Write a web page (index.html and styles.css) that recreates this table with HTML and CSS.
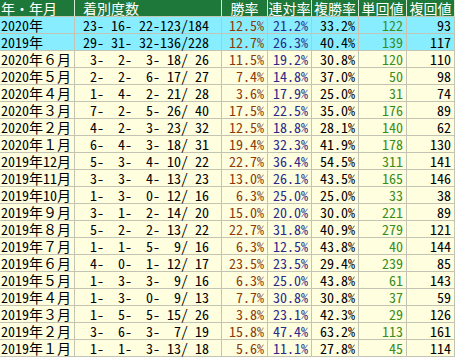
FILE: index.html
```html
<!DOCTYPE html>
<html lang="ja">
<head>
<meta charset="utf-8">
<link rel="stylesheet" href="styles.css">
</head>
<body>
<div class="tbl">
  <div class="row head">
    <div class="c c1">年・年月</div>
    <div class="c c2">着別度数</div>
    <div class="c hc">勝率</div>
    <div class="c hc">連対率</div>
    <div class="c hc">複勝率</div>
    <div class="c hc">単回値</div>
    <div class="c hc">複回値</div>
  </div>
  <div class="row year"><div class="c c1"><span class="h">2020</span>年</div><div class="c c2 h">23- 16- 22-123/184</div><div class="c n win h">12.5%</div><div class="c n ren h">21.2%</div><div class="c n fuku h">33.2%</div><div class="c n tan h">122</div><div class="c n fk h">93</div></div>
  <div class="row year"><div class="c c1"><span class="h">2019</span>年</div><div class="c c2 h">29- 31- 32-136/228</div><div class="c n win h">12.7%</div><div class="c n ren h">26.3%</div><div class="c n fuku h">40.4%</div><div class="c n tan h">139</div><div class="c n fk h">117</div></div>
  <div class="row mon"><div class="c c1"><span class="h">2020</span>年６月</div><div class="c c2 h"> 3-  2-  3- 18/ 26</div><div class="c n win h">11.5%</div><div class="c n ren h">19.2%</div><div class="c n fuku h">30.8%</div><div class="c n tan h">120</div><div class="c n fk h">110</div></div>
  <div class="row mon"><div class="c c1"><span class="h">2020</span>年５月</div><div class="c c2 h"> 2-  2-  6- 17/ 27</div><div class="c n win h">7.4%</div><div class="c n ren h">14.8%</div><div class="c n fuku h">37.0%</div><div class="c n tan h">50</div><div class="c n fk h">98</div></div>
  <div class="row mon"><div class="c c1"><span class="h">2020</span>年４月</div><div class="c c2 h"> 1-  4-  2- 21/ 28</div><div class="c n win h">3.6%</div><div class="c n ren h">17.9%</div><div class="c n fuku h">25.0%</div><div class="c n tan h">31</div><div class="c n fk h">74</div></div>
  <div class="row mon"><div class="c c1"><span class="h">2020</span>年３月</div><div class="c c2 h"> 7-  2-  5- 26/ 40</div><div class="c n win h">17.5%</div><div class="c n ren h">22.5%</div><div class="c n fuku h">35.0%</div><div class="c n tan h">176</div><div class="c n fk h">89</div></div>
  <div class="row mon"><div class="c c1"><span class="h">2020</span>年２月</div><div class="c c2 h"> 4-  2-  3- 23/ 32</div><div class="c n win h">12.5%</div><div class="c n ren h">18.8%</div><div class="c n fuku h">28.1%</div><div class="c n tan h">140</div><div class="c n fk h">62</div></div>
  <div class="row mon"><div class="c c1"><span class="h">2020</span>年１月</div><div class="c c2 h"> 6-  4-  3- 18/ 31</div><div class="c n win h">19.4%</div><div class="c n ren h">32.3%</div><div class="c n fuku h">41.9%</div><div class="c n tan h">178</div><div class="c n fk h">130</div></div>
  <div class="row mon"><div class="c c1"><span class="h">2019</span>年<span class="h">12</span>月</div><div class="c c2 h"> 5-  3-  4- 10/ 22</div><div class="c n win h">22.7%</div><div class="c n ren h">36.4%</div><div class="c n fuku h">54.5%</div><div class="c n tan h">311</div><div class="c n fk h">141</div></div>
  <div class="row mon"><div class="c c1"><span class="h">2019</span>年<span class="h">11</span>月</div><div class="c c2 h"> 3-  3-  4- 13/ 23</div><div class="c n win h">13.0%</div><div class="c n ren h">26.1%</div><div class="c n fuku h">43.5%</div><div class="c n tan h">165</div><div class="c n fk h">146</div></div>
  <div class="row mon"><div class="c c1"><span class="h">2019</span>年<span class="h">10</span>月</div><div class="c c2 h"> 1-  3-  0- 12/ 16</div><div class="c n win h">6.3%</div><div class="c n ren h">25.0%</div><div class="c n fuku h">25.0%</div><div class="c n tan h">33</div><div class="c n fk h">38</div></div>
  <div class="row mon"><div class="c c1"><span class="h">2019</span>年９月</div><div class="c c2 h"> 3-  1-  2- 14/ 20</div><div class="c n win h">15.0%</div><div class="c n ren h">20.0%</div><div class="c n fuku h">30.0%</div><div class="c n tan h">221</div><div class="c n fk h">89</div></div>
  <div class="row mon"><div class="c c1"><span class="h">2019</span>年８月</div><div class="c c2 h"> 5-  2-  2- 13/ 22</div><div class="c n win h">22.7%</div><div class="c n ren h">31.8%</div><div class="c n fuku h">40.9%</div><div class="c n tan h">279</div><div class="c n fk h">121</div></div>
  <div class="row mon"><div class="c c1"><span class="h">2019</span>年７月</div><div class="c c2 h"> 1-  1-  5-  9/ 16</div><div class="c n win h">6.3%</div><div class="c n ren h">12.5%</div><div class="c n fuku h">43.8%</div><div class="c n tan h">40</div><div class="c n fk h">144</div></div>
  <div class="row mon"><div class="c c1"><span class="h">2019</span>年６月</div><div class="c c2 h"> 4-  0-  1- 12/ 17</div><div class="c n win h">23.5%</div><div class="c n ren h">23.5%</div><div class="c n fuku h">29.4%</div><div class="c n tan h">239</div><div class="c n fk h">85</div></div>
  <div class="row mon"><div class="c c1"><span class="h">2019</span>年５月</div><div class="c c2 h"> 1-  3-  3-  9/ 16</div><div class="c n win h">6.3%</div><div class="c n ren h">25.0%</div><div class="c n fuku h">43.8%</div><div class="c n tan h">61</div><div class="c n fk h">143</div></div>
  <div class="row mon"><div class="c c1"><span class="h">2019</span>年４月</div><div class="c c2 h"> 1-  3-  0-  9/ 13</div><div class="c n win h">7.7%</div><div class="c n ren h">30.8%</div><div class="c n fuku h">30.8%</div><div class="c n tan h">37</div><div class="c n fk h">59</div></div>
  <div class="row mon"><div class="c c1"><span class="h">2019</span>年３月</div><div class="c c2 h"> 1-  5-  5- 15/ 26</div><div class="c n win h">3.8%</div><div class="c n ren h">23.1%</div><div class="c n fuku h">42.3%</div><div class="c n tan h">29</div><div class="c n fk h">126</div></div>
  <div class="row mon"><div class="c c1"><span class="h">2019</span>年２月</div><div class="c c2 h"> 3-  6-  3-  7/ 19</div><div class="c n win h">15.8%</div><div class="c n ren h">47.4%</div><div class="c n fuku h">63.2%</div><div class="c n tan h">113</div><div class="c n fk h">161</div></div>
  <div class="row mon"><div class="c c1"><span class="h">2019</span>年１月</div><div class="c c2 h"> 1-  1-  3- 13/ 18</div><div class="c n win h">5.6%</div><div class="c n ren h">11.1%</div><div class="c n fuku h">27.8%</div><div class="c n tan h">45</div><div class="c n fk h">114</div></div>
</div>
</body>
</html>
```

FILE: styles.css
```css
html, body {
  margin: 0;
  padding: 0;
  background: #ffffff;
}
.tbl {
  width: 455px;
  font-family: "Noto Sans CJK JP", sans-serif;
  font-size: 14px;
  line-height: 16px;
  color: #000;
}
.row {
  display: grid;
  grid-template-columns: 75px 147px 46px 44px 47px 48px 48px;
  height: 17px;
}
.c {
  box-sizing: border-box;
  height: 17px;
  border-right: 1px solid #c4c4b4;
  border-bottom: 1px solid #c4c4b4;
  white-space: pre;
}
.h {
  font-feature-settings: "hwid" 1;
}
.head {
  background: #1e783a;
  color: #ffffff;
}
.head .c {
  border-right-color: #d8e8d8;
}
.year {
  background: #88eeff;
}
.mon {
  background: #ffffe0;
}
.c1 {
  padding-left: 1px;
}
.c2 {
  padding-left: 8px;
}
.hc {
  text-align: center;
}
.n {
  text-align: right;
  padding-right: 3px;
}
.win { color: #8b3a0a; }
.ren { color: #2a2a8c; }
.fuku { color: #000000; }
.tan { color: #3a8c1c; }
.fk { color: #000000; }
```
